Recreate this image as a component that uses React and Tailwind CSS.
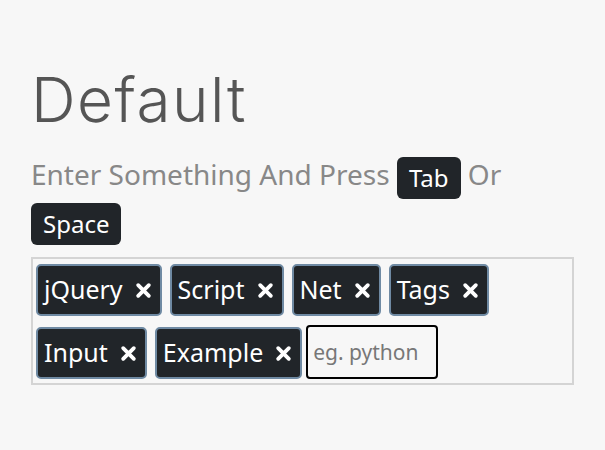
import { useState } from 'react'

const initialTags = ['jQuery', 'Script', 'Net', 'Tags', 'Input', 'Example']

function CloseIcon() {
  return (
    <svg width="17" height="17" viewBox="0 0 16 16" className="shrink-0">
      <path d="M3 3 L13 13 M13 3 L3 13" stroke="white" strokeWidth="3.6" strokeLinecap="round" />
    </svg>
  )
}

function Kbd({ children }) {
  return (
    <span className="inline-block rounded-md bg-[#212529] px-[12px] text-[24px] leading-[42px] text-white align-middle">
      {children}
    </span>
  )
}

function App() {
  const [tags, setTags] = useState(initialTags)
  const [value, setValue] = useState('')

  const onKeyDown = (e) => {
    if ((e.key === 'Tab' || e.key === ' ') && value.trim()) {
      e.preventDefault()
      setTags([...tags, value.trim()])
      setValue('')
    }
  }

  return (
    <div className="min-h-screen bg-[#f7f7f7] px-[31px] pt-[64px]" style={{ fontFamily: '"Noto Sans", sans-serif' }}>
      <h1 className="text-[62px] leading-[72px] font-light tracking-[1.5px] text-[#555]" style={{ fontFamily: '"Inter", sans-serif' }}>
        Default
      </h1>
      <p className="mt-[16px] text-[28px] leading-[45px] text-[#888]">
        Enter Something And Press <Kbd>Tab</Kbd> Or <Kbd>Space</Kbd>
      </p>
      <div className="mt-[12px] flex flex-wrap items-end gap-x-2 gap-y-[9px] border-2 border-[#d4d4d4] px-[3px] pt-[5px] pb-[4px]">
        {tags.map((t, i) => (
          <span
            key={i}
            className="flex h-[52px] items-center gap-[12px] rounded-[5px] border-2 border-[#6f8aa3] bg-[#212529] pl-[6px] pr-[8px] text-[25px] text-white"
          >
            {t}
            <button onClick={() => setTags(tags.filter((_, j) => j !== i))} className="flex items-center">
              <CloseIcon />
            </button>
          </span>
        ))}
        <input
          value={value}
          onChange={(e) => setValue(e.target.value)}
          onKeyDown={onKeyDown}
          placeholder="eg. python"
          className="-ml-1 h-[54px] w-[132px] rounded-[4px] border-2 border-black bg-[#f7f7f7] px-[5px] text-[21px] text-[#333] placeholder-[#777] outline-none"
        />
      </div>
    </div>
  )
}

export default App
